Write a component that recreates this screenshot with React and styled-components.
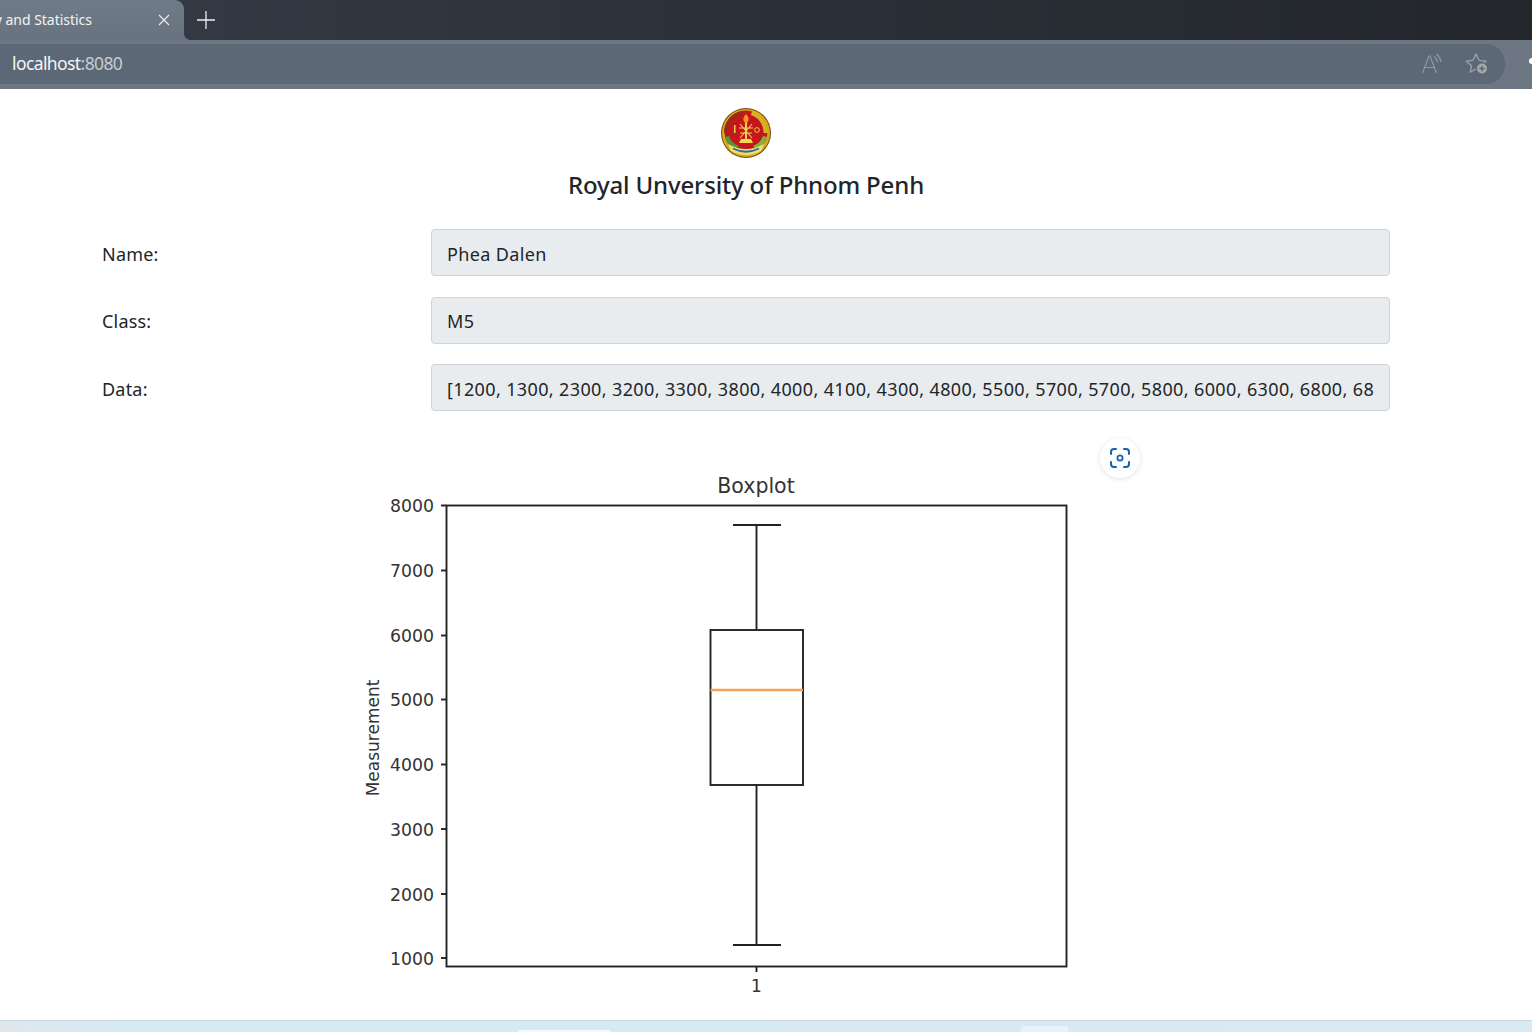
import React from 'react';
import styled, { createGlobalStyle } from 'styled-components';

const GlobalStyle = createGlobalStyle`
  html, body {
    margin: 0;
    padding: 0;
    height: 100%;
    overflow: hidden;
    background: #fff;
  }
  * { box-sizing: border-box; }
`;

const yTicks = [
  { label: '8000', y: 72.5 },
  { label: '7000', y: 137.5 },
  { label: '6000', y: 202.5 },
  { label: '5000', y: 266.5 },
  { label: '4000', y: 331.5 },
  { label: '3000', y: 396 },
  { label: '2000', y: 461 },
  { label: '1000', y: 525 },
];

const fields = [
  { label: 'Name:', value: 'Phea Dalen' },
  { label: 'Class:', value: 'M5' },
  {
    label: 'Data:',
    value:
      '[1200, 1300, 2300, 3200, 3300, 3800, 4000, 4100, 4300, 4800, 5500, 5700, 5700, 5800, 6000, 6300, 6800, 6800, 7000, 7700]',
  },
];

const Logo = () => (
  <svg width="52" height="52" viewBox="0 0 52 52">
    <circle cx="26" cy="26" r="25" fill="#6b4a12" />
    <circle cx="26" cy="26" r="24" fill="#d9a81c" />
    <circle cx="26" cy="25" r="21.5" fill="#c4161c" />
    <path d="M4 26 A22 22 0 0 1 21 4 L22 8 A18 18 0 0 0 8 26 Z" fill="#9c2a16" />
    <path d="M32 4 A22 22 0 0 1 48 26 L43.5 26 A18 18 0 0 0 31 8 Z" fill="#d8b21e" />
    <path d="M5 30 A21 21 0 0 0 15 43 L19 39 A16 16 0 0 1 9 29 Z" fill="#4f9a36" />
    <path d="M47 30 A21 21 0 0 1 37 43 L33 39 A16 16 0 0 0 43 29 Z" fill="#7fb536" />
    <path d="M26 7 C29.5 11 29.5 14 26 17 C22.5 14 22.5 11 26 7 Z" fill="#f09a1e" />
    <path d="M25 16 L27 16 L27 33 L25 33 Z" fill="#f2d24a" />
    <path d="M19 21 L33 21 M20 26 L32 26 M20 17 L32 31 M32 17 L20 31" stroke="#f0cf55" strokeWidth="1.1" fill="none" />
    <path d="M21 32 L31 32 L33 36 L19 36 Z" fill="#f5d94e" />
    <rect x="14" y="18" width="1.5" height="8" fill="#f2d24a" />
    <circle cx="37" cy="23" r="2.4" fill="none" stroke="#f2d24a" strokeWidth="0.9" />
    <path d="M8 37 Q26 47 44 37 L41 44 Q26 52 11 44 Z" fill="#f3e06a" />
    <path d="M13 41.5 Q26 48 39 41.5" stroke="#1f6fa8" strokeWidth="1.8" fill="none" />
  </svg>
);

const ReadAloudIcon = () => (
  <svg width="22" height="22" viewBox="0 0 22 22" fill="none" stroke="#8e99a4" strokeWidth="1.2">
    <path d="M1.5 20 L8 3 L9 3 L15.5 20 M4 14.5 L13 14.5" />
    <path d="M13 3.5 C15 5 16 7 16.5 9 M15.5 1 C18 3 19.5 6 20 9" />
  </svg>
);

const FavoriteIcon = () => (
  <svg width="26" height="24" viewBox="0 0 26 24" fill="none">
    <path
      d="M11 2 L14 8.3 L21 9.2 L15.8 13.8 L17 20 L11 17 L5.2 20.3 L6.5 13.8 L1.3 9.2 L8 8.3 Z"
      stroke="#98a3ad"
      strokeWidth="1.3"
      strokeLinejoin="round"
    />
    <circle cx="17" cy="16.5" r="6.3" fill="#5c6875" />
    <circle cx="17" cy="16.5" r="5" fill="#a3a8ac" />
    <path d="M17 13.8 V19.2 M14.3 16.5 H19.7" stroke="#5a6470" strokeWidth="1.3" />
  </svg>
);

const ScanIcon = () => (
  <svg width="22" height="22" viewBox="0 0 22 22" fill="none" stroke="#1a63a8" strokeWidth="2" strokeLinecap="round">
    <path d="M2 7 V5 A3 3 0 0 1 5 2 H7" />
    <path d="M15 2 H17 A3 3 0 0 1 20 5 V7" />
    <path d="M2 15 V17 A3 3 0 0 0 5 20 H7" />
    <path d="M15 20 H17 A3 3 0 0 0 20 17 V15" />
    <circle cx="11" cy="11" r="2.6" strokeWidth="1.8" />
  </svg>
);

const BoxplotChart = () => (
  <svg width="800" height="587" viewBox="0 0 800 587">
    <g fontFamily="'DejaVu Sans', sans-serif" fill="#333">
      <text x="410" y="60" fontSize="20.5" textAnchor="middle">Boxplot</text>
      <text
        x="0"
        y="0"
        fontSize="17"
        textAnchor="middle"
        transform="translate(33 305) rotate(-90)"
      >
        Measurement
      </text>
      {yTicks.map((t) => (
        <text key={t.label} x="88" y={t.y + 6.5} fontSize="17.3" textAnchor="end">
          {t.label}
        </text>
      ))}
      <text x="410.5" y="559" fontSize="17" textAnchor="middle">1</text>
    </g>
    <g stroke="#222" strokeWidth="1.9" fill="none">
      <rect x="100.5" y="72.5" width="620" height="461" />
      {yTicks.map((t) => (
        <line key={t.label} x1="95" x2="100" y1={t.y} y2={t.y} />
      ))}
      <line x1="410.5" x2="410.5" y1="534" y2="539" />
      <line x1="410.5" x2="410.5" y1="92" y2="197" />
      <line x1="387" x2="435" y1="92" y2="92" />
      <rect x="364.5" y="197" width="92.5" height="155" />
      <line x1="410.5" x2="410.5" y1="352" y2="512" />
      <line x1="387" x2="435" y1="512" y2="512" />
    </g>
    <line x1="364.5" x2="457" y1="257" y2="257" stroke="#f5a15a" strokeWidth="2.4" />
  </svg>
);

const App = () => (
  <Page>
    <GlobalStyle />
    <TabStrip>
      <Tab>
        <TabTitle>y and Statistics</TabTitle>
        <TabClose>
          <svg width="12" height="12" viewBox="0 0 12 12" stroke="#e8ebee" strokeWidth="1.2">
            <path d="M1 1 L11 11 M11 1 L1 11" />
          </svg>
        </TabClose>
      </Tab>
      <NewTab>
        <svg width="18" height="18" viewBox="0 0 18 18" stroke="#eef0f2" strokeWidth="1.3">
          <path d="M9 0 V18 M0 9 H18" />
        </svg>
      </NewTab>
    </TabStrip>
    <Toolbar>
      <AddressPill>
        <Url>
          localhost<UrlPort>:8080</UrlPort>
        </Url>
        <PillIcons>
          <ReadAloudIcon />
          <FavoriteIcon />
        </PillIcons>
      </AddressPill>
      <EdgeMark />
    </Toolbar>
    <Main>
      <Header>
        <Logo />
        <Title>Royal Unversity of Phnom Penh</Title>
      </Header>
      <Form>
        {fields.map((f) => (
          <Row key={f.label}>
            <FieldLabel>{f.label}</FieldLabel>
            <FieldInput readOnly value={f.value} />
          </Row>
        ))}
      </Form>
      <ChartWrap>
        <BoxplotChart />
        <ScanButton>
          <ScanIcon />
        </ScanButton>
      </ChartWrap>
    </Main>
    <BottomStrip>
      <StripTab $left={518} $width={93} />
      <StripTab $left={1021} $width={47} $tall />
    </BottomStrip>
  </Page>
);

const Page = styled.div`
  width: 1532px;
  height: 1032px;
  display: flex;
  flex-direction: column;
  overflow: hidden;
  font-family: "Noto Sans", "Open Sans", sans-serif;
  color: #212529;
`;

const TabStrip = styled.div`
  height: 40px;
  flex: none;
  display: flex;
  align-items: stretch;
  background: linear-gradient(90deg, #363c48 0%, #2d323b 40%, #23272c 100%);
`;

const Tab = styled.div`
  position: relative;
  width: 184px;
  display: flex;
  align-items: center;
  padding-bottom: 2px;
  background: linear-gradient(180deg, #707b88 0%, #68737f 100%);
  border-top-right-radius: 9px;

  &::after {
    content: "";
    position: absolute;
    right: -6px;
    bottom: 0;
    width: 6px;
    height: 6px;
    background: radial-gradient(circle at 100% 0, transparent 5.5px, #68737f 6px);
  }
`;

const TabTitle = styled.div`
  width: 92px;
  display: flex;
  justify-content: flex-end;
  overflow: hidden;
  white-space: nowrap;
  font-size: 14px;
  letter-spacing: -0.02px;
  color: #f2f4f6;
`;

const TabClose = styled.div`
  margin-left: 66px;
  padding-top: 2px;
  display: flex;
`;

const NewTab = styled.div`
  margin-left: 13px;
  display: flex;
  align-items: center;
`;

const Toolbar = styled.div`
  height: 49px;
  flex: none;
  position: relative;
  padding: 4px 27px 5px 0;
  background: #6c7783;
  display: flex;
`;

const AddressPill = styled.div`
  flex: 1;
  display: flex;
  align-items: center;
  justify-content: space-between;
  padding: 0 14px 0 12px;
  background: #5c6875;
  border-radius: 0 19px 19px 0;
`;

const Url = styled.div`
  font-size: 17.5px;
  letter-spacing: -0.6px;
  margin-top: -2px;
  color: #f4f6f8;
`;

const UrlPort = styled.span`
  color: #c6ccd2;
`;

const PillIcons = styled.div`
  display: flex;
  align-items: center;
  gap: 22px;
`;

const EdgeMark = styled.span`
  position: absolute;
  right: 0;
  top: 18px;
  width: 3px;
  height: 6px;
  background: #fff;
  border-radius: 3px 0 0 3px;
`;

const Main = styled.main`
  flex: 1;
  min-height: 0;
  padding: 18px 142px 0 102px;
  background: #fff;
`;

const Header = styled.header`
  display: flex;
  flex-direction: column;
  align-items: center;
`;

const Title = styled.h1`
  margin: 8px 0 0;
  font-size: 24px;
  line-height: 36px;
  font-weight: 500;
  letter-spacing: -0.15px;
  color: #212529;
`;

const Form = styled.div`
  margin-top: 26px;
  display: flex;
  flex-direction: column;
  gap: 20.5px;
`;

const Row = styled.div`
  display: grid;
  grid-template-columns: 329px 959px;
  align-items: center;
  height: 47px;
`;

const FieldLabel = styled.label`
  padding-top: 2px;
  font-size: 18px;
  letter-spacing: 0.2px;
`;

const FieldInput = styled.input`
  width: 100%;
  height: 47px;
  padding: 2px 15px 0;
  font-family: inherit;
  font-size: 18px;
  letter-spacing: 0.37px;
  color: #212529;
  background: #e9ecef;
  border: 1px solid #ced4da;
  border-radius: 4px;
  outline: none;
`;

const ChartWrap = styled.div`
  position: relative;
  width: 800px;
  height: 587px;
  margin: 22px auto 0;
`;

const ScanButton = styled.div`
  position: absolute;
  left: 754px;
  top: 5px;
  width: 40px;
  height: 40px;
  border-radius: 50%;
  background: #fff;
  box-shadow: 0 1px 5px rgba(0, 0, 0, 0.12);
  display: flex;
  align-items: center;
  justify-content: center;
`;

const BottomStrip = styled.div`
  position: relative;
  height: 12px;
  flex: none;
  background: linear-gradient(90deg, #dfe7ee 0%, #d6eaf2 8%, #d8eaf2 100%);
  border-top: 1px solid #c9d6dd;
`;

const StripTab = styled.span`
  position: absolute;
  left: ${(p) => p.$left}px;
  width: ${(p) => p.$width}px;
  top: ${(p) => (p.$tall ? 5 : 9)}px;
  bottom: 0;
  border-radius: 4px 4px 0 0;
  background: ${(p) => (p.$tall ? '#e8f2fa' : '#f4f8fa')};
`;

export default App;
